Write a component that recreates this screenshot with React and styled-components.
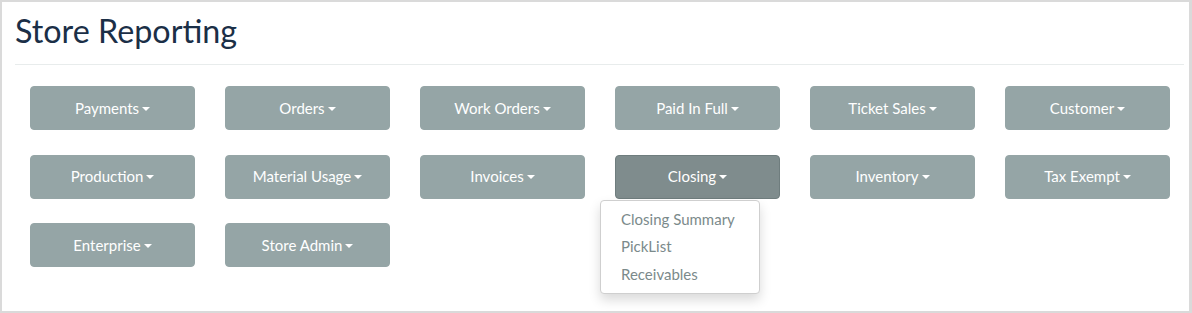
import React from "react";
import styled, { createGlobalStyle } from "styled-components";

const GlobalStyle = createGlobalStyle`
  html, body { margin: 0; padding: 0; background: #fff; }
  body { font-family: Lato, "Open Sans", sans-serif; }
`

const Page = styled.div`
  box-sizing: border-box;
  width: 1192px;
  height: 313px;
  border: 2px solid #dadada;
  border-right-width: 3px;
  padding: 0 5px 0 13px;
  background: #fff;
`

const Title = styled.h1`
  margin: 0;
  padding-top: 9px;
  font-size: 32.3px;
  line-height: 40px;
  font-weight: 400;
  color: #1b2f47;
`

const Rule = styled.hr`
  margin: 13px 0 0;
  border: 0;
  border-top: 1px solid #e8ecec;
`

const Grid = styled.div`
  display: grid;
  grid-template-columns: repeat(6, 165px);
  column-gap: 30px;
  row-gap: 24.5px;
  padding: 21px 15px 0;
`

const Cell = styled.div`
  position: relative;
`

const Button = styled.button`
  box-sizing: border-box;
  width: 165px;
  height: 44px;
  border: 1px solid ${p => (p.$open ? "#6f7d7e" : "#95a5a6")};
  border-radius: 4px;
  background: ${p => (p.$open ? "#7f8c8d" : "#95a5a6")};
  color: #fff;
  font-family: Lato, sans-serif;
  font-size: 15px;
  display: flex;
  align-items: center;
  justify-content: center;
  gap: 3px;
  padding: 0 0 1px;
  cursor: pointer;
`

const Caret = styled.span`
  display: inline-block;
  width: 0;
  height: 0;
  margin-top: 2px;
  border-top: 4px solid #fff;
  border-left: 4px solid transparent;
  border-right: 4px solid transparent;
`

const Menu = styled.ul`
  position: absolute;
  top: 45px;
  left: -15px;
  z-index: 10;
  box-sizing: border-box;
  width: 160px;
  margin: 0;
  padding: 5px 0;
  list-style: none;
  background: #fff;
  border: 1px solid #cfcfcf;
  border-radius: 4px;
  box-shadow: 0 6px 12px rgba(0, 0, 0, 0.15);
`

const MenuItem = styled.li`
  padding: 0 20px;
  font-size: 15px;
  line-height: 27.5px;
  color: #7b8a8b;
  white-space: nowrap;
`

const groups = [
  "Payments", "Orders", "Work Orders", "Paid In Full", "Ticket Sales", "Customer",
  "Production", "Material Usage", "Invoices", "Closing", "Inventory", "Tax Exempt",
  "Enterprise", "Store Admin",
]

const closingItems = ["Closing Summary", "PickList", "Receivables"]

export default function App() {
  return (
    <>
      <GlobalStyle />
      <Page>
        <Title>Store Reporting</Title>
        <Rule />
        <Grid>
          {groups.map(name => {
            const open = name === "Closing"
            return (
              <Cell key={name}>
                <Button $open={open}>
                  {name}
                  <Caret />
                </Button>
                {open && (
                  <Menu>
                    {closingItems.map(item => (
                      <MenuItem key={item}>{item}</MenuItem>
                    ))}
                  </Menu>
                )}
              </Cell>
            )
          })}
        </Grid>
      </Page>
    </>
  )
}
